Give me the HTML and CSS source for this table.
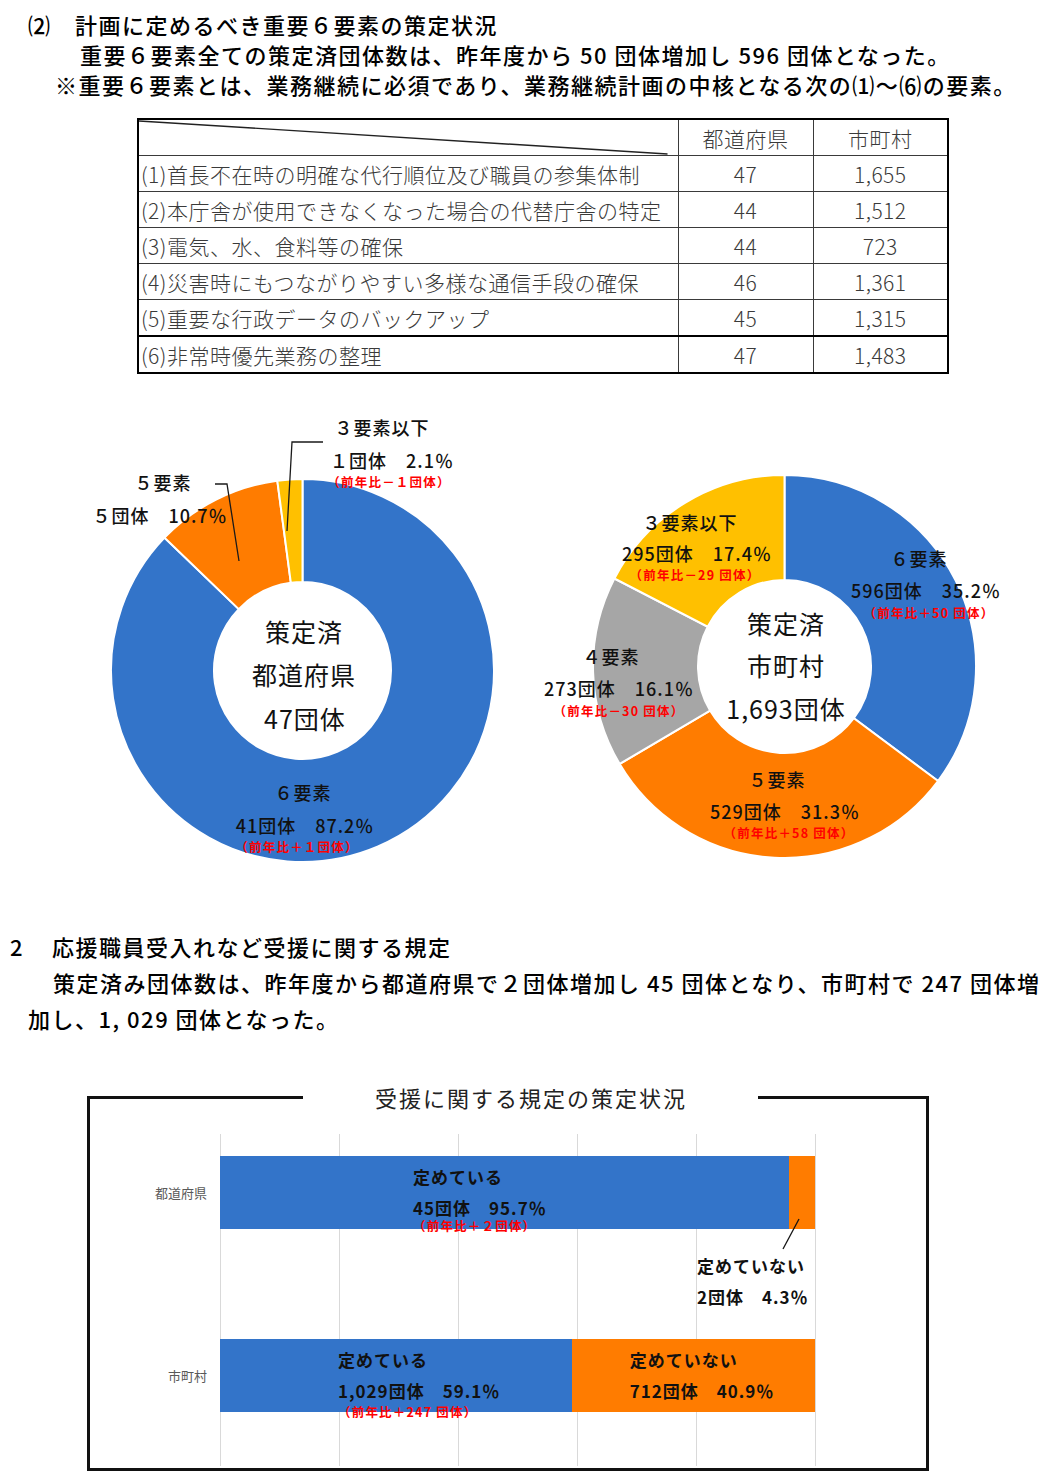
FILE: index.html
```html
<!DOCTYPE html>
<html lang="ja">
<head>
<meta charset="utf-8">
<title>業務継続計画 策定状況</title>
<link rel="stylesheet" href="styles.css">
</head>
<body>
<div class="page">
  <section class="sec1">
    <p class="l1">⑵　計画に定めるべき重要６要素の策定状況</p>
    <p class="l2">重要６要素全ての策定済団体数は、昨年度から 50 団体増加し 596 団体となった。</p>
    <p class="l3">※重要６要素とは、業務継続に必須であり、業務継続計画の中核となる次の⑴～⑹の要素。</p>
  </section>

  <table class="elements">
    <colgroup><col class="c-name"><col class="c-num"><col class="c-num"></colgroup>
    <thead>
      <tr>
        <th class="diag"><svg class="diag-svg" viewBox="0 0 540 36" preserveAspectRatio="none"><line x1="0" y1="1" x2="530" y2="35"/></svg></th>
        <th>都道府県</th>
        <th>市町村</th>
      </tr>
    </thead>
    <tbody>
      <tr><td class="name">(1)首長不在時の明確な代行順位及び職員の参集体制</td><td>47</td><td>1,655</td></tr>
      <tr><td class="name">(2)本庁舎が使用できなくなった場合の代替庁舎の特定</td><td>44</td><td>1,512</td></tr>
      <tr><td class="name">(3)電気、水、食料等の確保</td><td>44</td><td>723</td></tr>
      <tr><td class="name">(4)災害時にもつながりやすい多様な通信手段の確保</td><td>46</td><td>1,361</td></tr>
      <tr><td class="name">(5)重要な行政データのバックアップ</td><td>45</td><td>1,315</td></tr>
      <tr class="last"><td class="name">(6)非常時優先業務の整理</td><td>47</td><td>1,483</td></tr>
    </tbody>
  </table>

  <div class="donuts">
    <svg class="donut" width="450" height="548" viewBox="80 372 450 548">
      <path class="s-blue" d="M 302.5 480 A 191.5 191.5 0 1 1 164.56 538.66 L 238.75 610.11 A 88.5 88.5 0 1 0 302.5 583 Z"/>
      <path class="s-orange" d="M 164.56 538.66 A 191.5 191.5 0 0 1 277.30 481.67 L 290.85 583.77 A 88.5 88.5 0 0 0 238.75 610.11 Z"/>
      <path class="s-yellow" d="M 277.30 481.67 A 191.5 191.5 0 0 1 302.5 480 L 302.5 583 A 88.5 88.5 0 0 0 290.85 583.77 Z"/>
      <polyline class="leader-line" points="215,485 227,485 239,562"/>
      <polyline class="leader-line" points="323,443 292,443 287,532"/>
      <text class="lbl" x="382" y="428">３要素以下</text>
      <text class="lbl" x="392" y="461">１団体　2.1％</text>
      <text class="note" x="389" y="482">（前年比－１団体）</text>
      <text class="lbl" x="163" y="483">５要素</text>
      <text class="lbl" x="160" y="516">５団体　10.7％</text>
      <text class="lbl" x="303" y="793">６要素</text>
      <text class="lbl" x="305" y="826">41団体　87.2％</text>
      <text class="note" x="297" y="847">（前年比＋１団体）</text>
      <text class="ctr" x="304" y="632">策定済</text>
      <text class="ctr" x="304" y="675">都道府県</text>
      <text class="ctr" x="305" y="719">47団体</text>
    </svg>
    <svg class="donut" width="480" height="548" viewBox="530 372 480 548">
      <path class="s-blue" d="M 784.5 476 A 191.5 191.5 0 0 1 938.01 782.00 L 853.84 719.22 A 86.5 86.5 0 0 0 784.5 581 Z"/>
      <path class="s-orange" d="M 938.01 782.00 A 191.5 191.5 0 0 1 619.68 764.97 L 710.05 711.53 A 86.5 86.5 0 0 0 853.84 719.22 Z"/>
      <path class="s-gray" d="M 619.68 764.97 A 191.5 191.5 0 0 1 614.41 579.49 L 707.67 627.74 A 86.5 86.5 0 0 0 710.05 711.53 Z"/>
      <path class="s-yellow" d="M 614.41 579.49 A 191.5 191.5 0 0 1 784.5 476 L 784.5 581 A 86.5 86.5 0 0 0 707.67 627.74 Z"/>
      <text class="lbl" x="690" y="523">３要素以下</text>
      <text class="lbl" x="697" y="554">295団体　17.4％</text>
      <text class="note" x="695" y="575">（前年比－29 団体）</text>
      <text class="lbl" x="919" y="559">６要素</text>
      <text class="lbl" x="926" y="591">596団体　35.2％</text>
      <text class="note" x="929" y="613">（前年比＋50 団体）</text>
      <text class="lbl" x="611" y="657">４要素</text>
      <text class="lbl" x="619" y="689">273団体　16.1％</text>
      <text class="note" x="619" y="711">（前年比－30 団体）</text>
      <text class="lbl" x="777" y="780">５要素</text>
      <text class="lbl" x="785" y="812">529団体　31.3％</text>
      <text class="note" x="789" y="833">（前年比＋58 団体）</text>
      <text class="ctr" x="786" y="624">策定済</text>
      <text class="ctr" x="786" y="666">市町村</text>
      <text class="ctr" x="786" y="709">1,693団体</text>
    </svg>
  </div>

  <section class="sec2">
    <p class="s2-title"><span class="num">2</span>応援職員受入れなど受援に関する規定</p>
    <p class="s2-l2">策定済み団体数は、昨年度から都道府県で２団体増加し 45 団体となり、市町村で 247 団体増</p>
    <p class="s2-l3">加し、1, 029 団体となった。</p>
  </section>

  <fieldset class="chart">
    <legend>受援に関する規定の策定状況</legend>
    <div class="chart-body">
      <div class="grid-lines"></div>
      <div class="cat cat-1">都道府県</div>
      <div class="bar bar-1">
        <div class="seg seg-yes" style="width:95.7%">
          <div class="seg-text pad-193">
            <p class="bt">定めている</p>
            <p class="bt bt2">45団体　95.7％</p>
            <p class="bn">（前年比＋２団体）</p>
          </div>
        </div>
        <div class="seg seg-no" style="width:4.3%"></div>
      </div>
      <div class="callout">
        <p class="bt">定めていない</p>
        <p class="bt ct2">2団体　4.3％</p>
      </div>
      <div class="cat cat-2">市町村</div>
      <div class="bar bar-2">
        <div class="seg seg-yes" style="width:59.1%">
          <div class="seg-text pad-118">
            <p class="bt">定めている</p>
            <p class="bt bt2">1,029団体　59.1％</p>
            <p class="bn bn2">（前年比＋247 団体）</p>
          </div>
        </div>
        <div class="seg seg-no" style="width:40.9%">
          <div class="seg-text pad-58">
            <p class="bt">定めていない</p>
            <p class="bt bt2">712団体　40.9％</p>
          </div>
        </div>
      </div>
      <svg class="leader" width="24" height="40" viewBox="0 0 24 40"><line x1="19" y1="5" x2="3" y2="35"/></svg>
    </div>
  </fieldset>
</div>
</body>
</html>
```
FILE: styles.css
```css
html, body {
  margin: 0;
  padding: 0;
  background: #ffffff;
}

body {
  font-family: "Noto Sans CJK JP", "Noto Sans", sans-serif;
  color: #000;
}

.page {
  width: 1064px;
}

p {
  margin: 0;
}

/* ---------- section 1 text ---------- */
.sec1 {
  padding-top: 9px;
  font-size: 22px;
  line-height: 30px;
  font-weight: 500;
  letter-spacing: 1.5px;
  white-space: nowrap;
}
.l1 { padding-left: 28px; }
.l2 { padding-left: 80px; }
.l3 { padding-left: 55px; }

/* ---------- table ---------- */
.elements {
  margin: 19px 0 0 137px;
  width: 810px;
  table-layout: fixed;
  border-collapse: collapse;
  border: 2px solid #000;
  font-size: 21px;
  letter-spacing: 0.5px;
  color: #3a3a3a;
}
.c-name { width: 540px; }
.c-num { width: 135px; }

.elements th,
.elements td {
  border: 1px solid #3a3a3a;
  height: 35px;
  padding: 0;
  font-weight: 300;
  text-align: center;
  vertical-align: middle;
  white-space: nowrap;
}
.elements td.name {
  text-align: left;
  padding-left: 2px;
}
.elements tr.last td {
  border-top: 2px solid #000;
}
.elements th.diag {
  padding: 0;
}
.diag-svg {
  display: block;
  width: 100%;
  height: 35px;
}
.diag-svg line {
  stroke: #222;
  stroke-width: 1.4;
  vector-effect: non-scaling-stroke;
}

/* ---------- donuts ---------- */
.donuts {
  display: flex;
  margin-top: -3px;
  padding-left: 80px;
}
.donut {
  display: block;
  flex: none;
}
.s-blue { fill: #3374c9; stroke: #fff; stroke-width: 2; }
.s-orange { fill: #ff7c00; stroke: #fff; stroke-width: 2; }
.s-yellow { fill: #ffc000; stroke: #fff; stroke-width: 2; }
.s-gray { fill: #a6a6a6; stroke: #fff; stroke-width: 2; }

.leader-line {
  fill: none;
  stroke: #1a1a1a;
  stroke-width: 1.3;
}

.lbl,
.note,
.ctr {
  text-anchor: middle;
  dominant-baseline: central;
  font-family: "Noto Sans CJK JP", "Noto Sans", sans-serif;
}
.lbl {
  font-size: 18px;
  font-weight: 500;
  letter-spacing: 1px;
  fill: #111;
}
.note {
  font-size: 12.5px;
  font-weight: 700;
  letter-spacing: 1.2px;
  fill: #ff0000;
}
.ctr {
  font-size: 25px;
  font-weight: 400;
  letter-spacing: 1px;
  fill: #111;
}

/* ---------- section 2 text ---------- */
.sec2 {
  padding-top: 9px;
  font-size: 22px;
  line-height: 36px;
  font-weight: 500;
  letter-spacing: 1.5px;
  white-space: nowrap;
}
.s2-title { padding-left: 10px; }
.s2-title .num {
  display: inline-block;
  width: 42px;
}
.s2-l2 { padding-left: 53px; }
.s2-l3 { padding-left: 28px; }

/* ---------- bar chart ---------- */
.chart {
  margin: 46px 0 0 87px;
  padding: 0 0 2px 0;
  width: 842px;
  min-width: 0;
  box-sizing: border-box;
  border: 3px solid #111;
}
.chart legend {
  margin-left: 213px;
  padding: 0 71px 0 72px;
  font-size: 22px;
  line-height: 30px;
  letter-spacing: 2px;
  color: #222;
}

.chart-body {
  position: relative;
  margin-top: 22px;
  display: grid;
  grid-template-columns: 130px 596px;
  grid-template-rows: 22px 73px 110px 73px 54px;
}
.grid-lines {
  grid-column: 2;
  grid-row: 1 / 6;
  background: repeating-linear-gradient(90deg, #d9d9d9 0, #d9d9d9 1px, transparent 1px, transparent 119px);
}
.cat {
  grid-column: 1;
  align-self: center;
  text-align: right;
  padding-right: 13px;
  font-size: 13px;
  color: #595959;
}
.cat-1 { grid-row: 2; }
.cat-2 { grid-row: 4; }

.bar {
  grid-column: 2;
  display: flex;
  width: 595px;
  height: 73px;
}
.bar-1 { grid-row: 2; }
.bar-2 { grid-row: 4; }

.seg {
  height: 73px;
  flex: none;
}
.seg-yes { background: #3374c9; }
.seg-no { background: #ff7c00; }

.seg-text {
  padding-top: 10px;
  white-space: nowrap;
}
.pad-193 { padding-left: 193px; }
.pad-118 { padding-left: 118px; }
.pad-58 { padding-left: 58px; }

.bt {
  font-size: 17px;
  line-height: 22px;
  font-weight: 700;
  letter-spacing: 1px;
  color: #111;
}
.bt2 { margin-top: 9px; }
.bn {
  margin-top: 1px;
  font-size: 12.5px;
  line-height: 12px;
  font-weight: 700;
  letter-spacing: 1.2px;
  color: #ff0000;
}
.bn2 { margin-top: 4px; }

.callout {
  grid-column: 2;
  grid-row: 3;
  padding: 26px 0 0 477px;
  white-space: nowrap;
}
.ct2 { margin-top: 9px; }

.leader {
  position: absolute;
  left: 690px;
  top: 80px;
}
.leader line {
  stroke: #111;
  stroke-width: 1.3;
}
```
